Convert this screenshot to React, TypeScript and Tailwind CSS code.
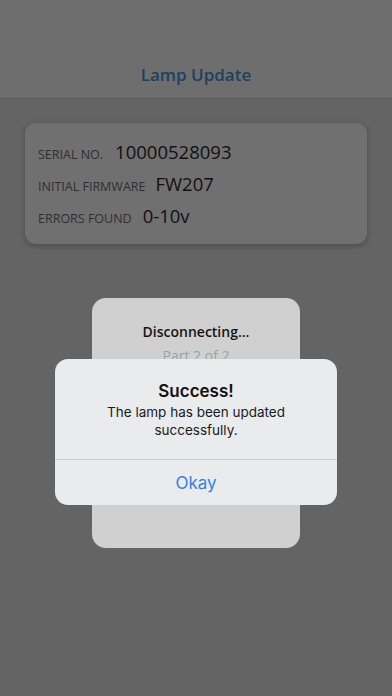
import React from "react";

export default function App() {
  return (
    <div
      className="relative w-[392px] h-[696px] overflow-hidden bg-[#646464]"
      style={{ fontFamily: '"Open Sans", "Noto Sans", sans-serif' }}
    >
      <div className="h-[99px] bg-[#6e6e6e] border-b border-[#5a5a5a] flex items-end justify-center pb-[12px]">
        <span className="text-[17px] leading-[22px] font-semibold text-[#213f63]">Lamp Update</span>
      </div>

      <div className="mx-[25px] mt-[24px] h-[121px] rounded-[11px] bg-[#707070] shadow-[0_2px_6px_rgba(0,0,0,0.25)] pl-[13px] pt-[15px] flex flex-col gap-[8px]">
        <div className="flex items-baseline h-[24px]">
          <span className="text-[12.5px] font-medium text-[#2f2f2f]">SERIAL NO.</span>
          <span className="ml-[12px] text-[18.5px] text-[#111]">10000528093</span>
        </div>
        <div className="flex items-baseline h-[24px]">
          <span className="text-[12.5px] font-medium text-[#2f2f2f]">INITIAL FIRMWARE</span>
          <span className="ml-[10px] text-[18.5px] text-[#111]">FW207</span>
        </div>
        <div className="flex items-baseline h-[24px]">
          <span className="text-[12.5px] font-medium text-[#2f2f2f]">ERRORS FOUND</span>
          <span className="ml-[11px] text-[18.5px] text-[#111]">0-10v</span>
        </div>
      </div>

      <div className="absolute left-[92px] top-[298px] w-[208px] h-[250px] rounded-[14px] bg-[#d0d0d0] flex flex-col items-center pt-[24px]">
        <span className="text-[14px] leading-[20px] font-semibold text-[#151515]">Disconnecting...</span>
        <span className="mt-[4px] text-[14px] leading-[20px] text-[#a0a0a0]">Part 2 of 2</span>
      </div>

      <div
        className="absolute left-[55px] top-[359px] w-[282px] h-[146px] rounded-[13px] bg-[#e9ebec] flex flex-col"
        style={{ fontFamily: 'Inter, "Liberation Sans", sans-serif' }}
      >
        <div className="flex-1 flex flex-col items-center pt-[21px]">
          <span className="text-[17px] leading-[22px] font-semibold text-[#111]">Success!</span>
          <span className="mt-[1px] text-[13.5px] leading-[18px] text-[#1a1a1a] text-center w-[200px]">
            The lamp has been updated successfully.
          </span>
        </div>
        <div className="h-[46px] border-t border-[#cacccd] flex items-center justify-center pt-[3px]">
          <span className="text-[17px] text-[#3a7fe0]">Okay</span>
        </div>
      </div>
    </div>
  );
}
